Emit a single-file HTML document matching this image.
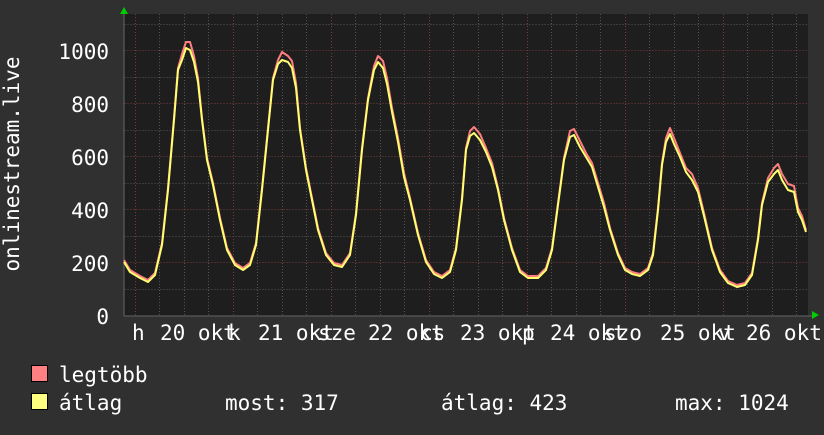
<!DOCTYPE html>
<html><head><meta charset="utf-8"><style>
html,body{margin:0;padding:0;background:#303030;}
body{width:824px;height:430px;overflow:hidden;}
svg text{font-family:"DejaVu Sans Mono","Liberation Mono",monospace;font-size:21px;fill:#fff;}
</style></head><body>
<svg width="824" height="430" xmlns="http://www.w3.org/2000/svg">
<rect width="824" height="430" fill="#303030"/>
<rect x="124" y="14" width="684" height="302" fill="#1e1e1e"/>
<g stroke="#555" stroke-width="1" stroke-dasharray="1,2">
<path d="M124.5 289.5H808M124.5 236.5H808M124.5 183.5H808M124.5 130.5H808M124.5 77.5H808M124.5 24.5H808"/>
<path d="M159.5 14V316M184.5 14V316M208.5 14V316M257.5 14V316M282.5 14V316M306.5 14V316M355.5 14V316M380.5 14V316M404.5 14V316M453.5 14V316M478.5 14V316M502.5 14V316M551.5 14V316M576.5 14V316M600.5 14V316M649.5 14V316M674.5 14V316M698.5 14V316M747.5 14V316M772.5 14V316M796.5 14V316"/>
</g>
<g stroke="#7a3a3a" stroke-width="1" stroke-dasharray="1,2">
<path d="M124.5 262.5H808M124.5 209.5H808M124.5 156.5H808M124.5 103.5H808M124.5 50.5H808"/>
<path d="M135.5 14V316M233.5 14V316M331.5 14V316M429.5 14V316M527.5 14V316M625.5 14V316M723.5 14V316"/>
</g>
<path d="M124 316H812M124 14V316" stroke="#666" stroke-width="1"/>
<polygon points="120,14 124,7 128,14" fill="#00cc00"/>
<polygon points="812,311 819,315 812,319" fill="#00cc00"/>
<g fill="none" stroke-linejoin="round">
<polyline transform="translate(0,-2)" stroke="#ff7f7f" stroke-width="2" points="124,262 130,272 140,278 148,282 155,275 162,245 168,190 174,120 178,70 182,56 186,44 190,44 194,58 198,80 202,120 207,160 213,185 220,220 227,250 235,265 243,270 250,265 256,245 262,190 268,130 273,80 278,62 282,54 288,58 292,63 296,85 300,130 306,170 312,200 318,230 326,255 334,265 342,267 350,255 356,215 362,150 368,100 374,68 378,58 383,63 387,80 392,110 398,140 404,175 410,200 418,235 426,262 434,274 442,278 450,272 456,250 462,200 466,150 470,133 474,129 480,136 486,150 492,165 498,190 504,220 512,250 520,272 528,278 538,278 546,270 552,250 558,205 564,160 570,133 574,131 580,143 586,155 592,165 598,185 604,205 610,230 618,255 625,270 632,274 640,276 648,270 653,255 658,210 662,165 666,140 670,130 674,140 680,155 686,170 692,176 698,190 704,215 712,250 720,272 728,283 737,287 745,285 752,275 758,240 762,205 768,180 774,170 778,166 782,176 788,186 794,188 798,210 802,218 806,232"/>
<polyline stroke="#ffff70" stroke-width="2" points="124,262 130,272 140,278 148,282 155,275 162,245 168,190 174,120 178,70 182,60 186,48 190,50 194,62 198,82 202,120 207,160 213,185 220,220 227,250 235,265 243,270 250,265 256,245 262,190 268,130 273,80 278,64 282,60 288,62 292,68 296,88 300,130 306,170 312,200 318,230 326,255 334,265 342,267 350,255 356,215 362,150 368,100 374,70 378,62 383,68 387,84 392,112 398,142 404,177 410,200 418,235 426,262 434,274 442,278 450,272 456,250 462,200 466,150 470,136 474,133 480,140 486,152 492,167 498,190 504,220 512,250 520,272 528,278 538,278 546,270 552,250 558,205 564,160 570,137 574,135 580,147 586,157 592,167 598,187 604,207 610,230 618,255 625,270 632,274 640,276 648,270 653,255 658,210 662,165 666,142 670,134 674,144 680,157 686,172 692,180 698,192 704,216 712,250 720,272 728,283 737,287 745,285 752,275 758,240 762,205 768,182 774,174 778,170 782,180 788,190 794,192 798,212 802,220 806,232"/>
</g>
<g text-anchor="end">
<text x="109" y="59">1000</text>
<text x="109" y="112">800</text>
<text x="109" y="165">600</text>
<text x="109" y="218">400</text>
<text x="109" y="271">200</text>
<text x="109" y="324">0</text>
</g>
<text transform="translate(19,164) rotate(-90)" text-anchor="middle">onlinestream.live</text>
<text x="132" y="340">h</text>
<text x="228" y="340">k</text>
<text x="318" y="340">sze</text>
<text x="420" y="340">cs</text>
<text x="522" y="340">p</text>
<text x="604" y="340">szo</text>
<text x="718" y="340">v</text>
<text x="160" y="340">20 okt</text>
<text x="258" y="340">21 okt</text>
<text x="368" y="340">22 okt</text>
<text x="460" y="340">23 okt</text>
<text x="550" y="340">24 okt</text>
<text x="660" y="340">25 okt</text>
<text x="746" y="340">26 okt</text>
<rect x="31.5" y="365.5" width="16" height="16" fill="#ff8080" stroke="#000"/>
<rect x="31.5" y="393.5" width="16" height="16" fill="#ffff80" stroke="#000"/>
<text x="59" y="382">legtöbb</text>
<text x="59" y="410">átlag</text>
<text x="225" y="410">most: 317</text>
<text x="441" y="410">átlag: 423</text>
<text x="675" y="410">max: 1024</text>
</svg>
</body></html>
